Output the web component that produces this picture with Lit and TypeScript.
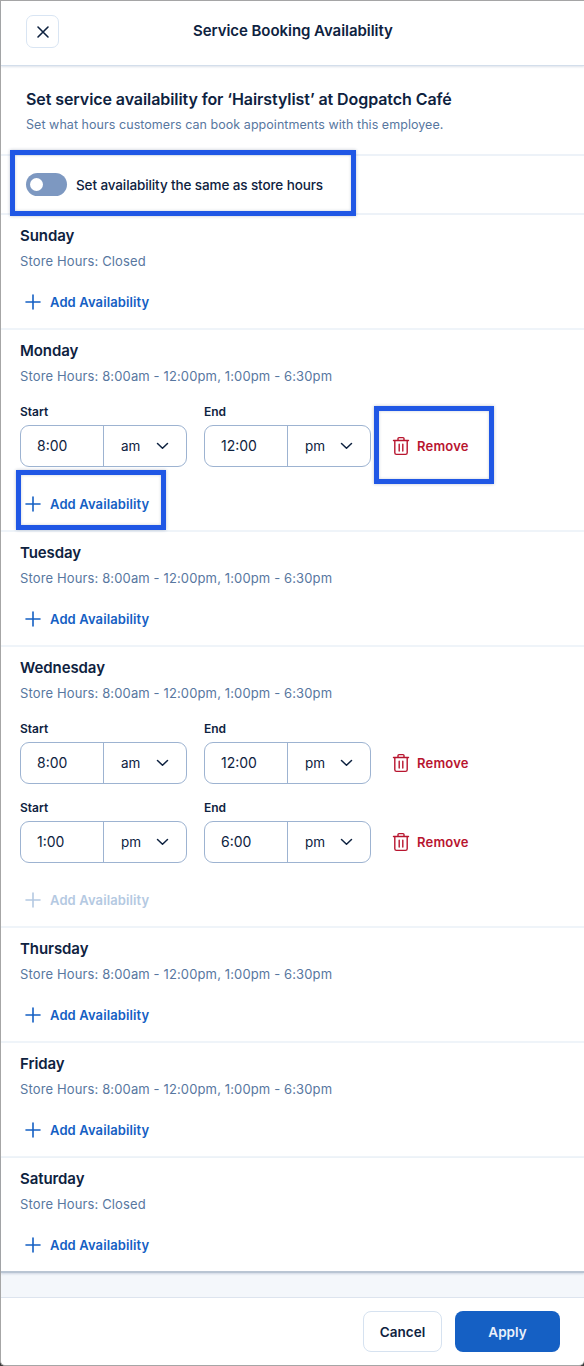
import { LitElement, html, css, svg } from "lit";
import { customElement } from "lit/decorators.js";

type Slot = { start: string; sm: string; end: string; em: string };
type Day = { name: string; hours: string; slots: Slot[]; disabled?: boolean };

const OPEN = "Store Hours: 8:00am - 12:00pm, 1:00pm - 6:30pm";
const CLOSED = "Store Hours: Closed";
const AM: Slot = { start: "8:00", sm: "am", end: "12:00", em: "pm" };
const PM: Slot = { start: "1:00", sm: "pm", end: "6:00", em: "pm" };

const DAYS: Day[] = [
  { name: "Sunday", hours: CLOSED, slots: [] },
  { name: "Monday", hours: OPEN, slots: [AM] },
  { name: "Tuesday", hours: OPEN, slots: [] },
  { name: "Wednesday", hours: OPEN, slots: [AM, PM], disabled: true },
  { name: "Thursday", hours: OPEN, slots: [] },
  { name: "Friday", hours: OPEN, slots: [] },
  { name: "Saturday", hours: CLOSED, slots: [] },
];

const chevron = svg`<svg class="chev" viewBox="0 0 14 14" width="14" height="14"><path d="M1.500 4.500 6.500 9.300 11.500 4.500" fill="none" stroke="#0e2240" stroke-width="1.5" stroke-linecap="round" stroke-linejoin="round"/></svg>`;
const plus = svg`<svg viewBox="0 0 16 16" width="16" height="16"><path d="M8 1v14M1 8h14" fill="none" stroke="currentColor" stroke-width="1.6" stroke-linecap="round"/></svg>`;
const trash = svg`<svg viewBox="0 0 18 20" width="18" height="20"><path d="M1.500 4.500h15M6 4.500V2.600c0-.6.4-1 1-1h4c.6 0 1 .4 1 1v1.900M2.800 4.500v12.200c0 .9.700 1.700 1.700 1.700h9c1 0 1.700-.8 1.700-1.700V4.500M7.200 8.200v6.800M10.800 8.200v6.800" fill="none" stroke="#b8152f" stroke-width="1.4" stroke-linecap="round" stroke-linejoin="round"/></svg>`;

@customElement("app-root")
export class AppRoot extends LitElement {
  static styles = css`
    :host {
      display: block;
      position: relative;
      width: 584px;
      height: 1366px;
      background: #3a3a3a;
      font-family: Inter, "Noto Sans", sans-serif;
      color: #0e2240;
      overflow: hidden;
    }
    .win {
      height: 100%;
      box-sizing: border-box;
      background: #fff;
      border-left: 1px solid #a6a6a6;
      border-top: 1px solid #a6a6a6;
      border-bottom: 1px solid #a6a6a6;
      border-radius: 0 0 5px 5px;
      display: flex;
      flex-direction: column;
    }
    header {
      height: 65px;
      flex: none;
      box-sizing: border-box;
      display: flex;
      align-items: center;
      padding-left: 25px;
      border-bottom: 1px solid #d3deeb;
      box-shadow: 0 1px 2px rgba(120, 140, 170, 0.25);
      position: relative;
    }
    .close {
      width: 33px;
      height: 33px;
      box-sizing: border-box;
      border: 1px solid #d9e5f3;
      border-radius: 7px;
      display: flex;
      align-items: center;
      justify-content: center;
      margin-top: -3px;
    }
    header h1 {
      margin: -5px 0 0 134px;
      font-size: 15px;
      font-weight: 600;
      letter-spacing: -0.05px;
      line-height: 20px;
    }
    .intro {
      flex: none;
      height: 90px;
      box-sizing: border-box;
      padding: 23px 0 0 25px;
      border-bottom: 2px solid #edf2f8;
    }
    .intro h2 {
      margin: 0;
      font-size: 16px;
      font-weight: 600;
      line-height: 20px;
      letter-spacing: -0.08px;
    }
    .intro p {
      margin: 7px 0 0;
      font-size: 12.5px;
      line-height: 18px;
      color: #58779f;
      letter-spacing: 0.05px;
    }
    .toggle-row {
      flex: none;
      height: 59px;
      box-sizing: border-box;
      display: flex;
      align-items: center;
      gap: 9px;
      padding-left: 25px;
      border-bottom: 2px solid #edf2f8;
      font-size: 13.5px;
      font-weight: 500;
      letter-spacing: -0.11px;
    }
    .switch {
      width: 41px;
      height: 23px;
      border-radius: 12px;
      background: #7d98c1;
      display: flex;
      align-items: center;
      padding-left: 4px;
      box-sizing: border-box;
    }
    .switch i {
      width: 13px;
      height: 13px;
      background: #fff;
      border-radius: 50%;
    }
    .day {
      flex: none;
      box-sizing: border-box;
      padding: 11px 0 6px 19px;
      border-bottom: 2px solid #eff4f9;
    }
    .day:last-of-type {
      border-bottom: 2px solid #b9c5d3;
      box-shadow: 0 1px 2px rgba(120, 140, 170, 0.3);
      position: relative;
    }
    .day h3 {
      margin: 0;
      font-size: 15px;
      font-weight: 600;
      line-height: 20px;
      letter-spacing: -0.08px;
    }
    .hours {
      margin-top: 5px;
      font-size: 13px;
      line-height: 20px;
      color: #58779f;
      letter-spacing: 0.13px;
    }
    .slots {
      margin-top: 18px;
      display: flex;
      flex-direction: column;
      gap: 16px;
    }
    .slot {
      display: flex;
      gap: 17px;
      align-items: flex-end;
    }
    .field label {
      display: block;
      font-size: 12px;
      font-weight: 600;
      line-height: 16px;
      margin-bottom: 5px;
    }
    .input {
      width: 167px;
      height: 42px;
      box-sizing: border-box;
      border: 1px solid #9db3d1;
      border-radius: 9px;
      display: flex;
      align-items: center;
      font-size: 14px;
    }
    .input .val {
      width: 83px;
      height: 100%;
      box-sizing: border-box;
      border-right: 1px solid #9db3d1;
      padding-left: 16px;
      line-height: 40px;
    }
    .input .mer {
      padding-left: 17px;
      width: 35px;
      font-size: 13.5px;
    }
    .remove {
      height: 42px;
      display: flex;
      align-items: center;
      gap: 7px;
      margin-left: 4px;
      font-size: 13px;
      font-weight: 600;
      color: #b8152f;
      letter-spacing: 0.2px;
    }
    .add {
      height: 40px;
      display: flex;
      align-items: center;
      gap: 9px;
      padding-left: 5px;
      font-size: 13px;
      font-weight: 600;
      color: #1560c4;
      letter-spacing: 0.12px;
    }
    .slots + .add {
      margin-top: 17px;
    }
    .hours + .add {
      margin-top: 11px;
    }
    .add.off {
      color: #b4c9e2;
    }
    .strip {
      flex: 1;
      background: #f4f7fb;
      border-bottom: 1px solid #dde4ee;
    }
    footer {
      flex: none;
      height: 67px;
      box-sizing: border-box;
      display: flex;
      justify-content: flex-end;
      gap: 13px;
      padding: 13px 24px 0 0;
    }
    .btn {
      height: 41px;
      box-sizing: border-box;
      border-radius: 8px;
      display: flex;
      align-items: center;
      justify-content: center;
      font-size: 13.5px;
      font-weight: 600;
    }
    .cancel {
      width: 79px;
      border: 1px solid #d6e2f0;
    }
    .apply {
      width: 105px;
      background: #1560c4;
      color: #eaf1fb;
    }
    .hl {
      position: absolute;
      box-sizing: border-box;
      border: 5px solid #2057e5;
      box-shadow: 0 0 3px rgba(40, 60, 100, 0.3), inset 0 0 3px rgba(40, 60, 100, 0.25);
    }
    .hl-toggle {
      left: 10px;
      top: 150px;
      width: 346px;
      height: 66px;
    }
    .hl-remove {
      left: 374px;
      top: 406px;
      width: 120px;
      height: 78px;
    }
    .hl-add {
      left: 16px;
      top: 470px;
      width: 150px;
      height: 60px;
    }
  `;

  private renderSlot(s: Slot) {
    const field = (label: string, val: string, mer: string) => html`
      <div class="field">
        <label>${label}</label>
        <div class="input">
          <span class="val">${val}</span><span class="mer">${mer}</span>${chevron}
        </div>
      </div>
    `;
    return html`
      <div class="slot">
        ${field("Start", s.start, s.sm)} ${field("End", s.end, s.em)}
        <div class="remove">${trash}<span>Remove</span></div>
      </div>
    `;
  }

  private renderDay(d: Day) {
    return html`
      <section class="day">
        <h3>${d.name}</h3>
        <div class="hours">${d.hours}</div>
        ${d.slots.length
          ? html`<div class="slots">${d.slots.map((s) => this.renderSlot(s))}</div>`
          : null}
        <div class="add ${d.disabled ? "off" : ""}">${plus}<span>Add Availability</span></div>
      </section>
    `;
  }

  render() {
    return html`
      <div class="win">
        <header>
          <div class="close">
            <svg viewBox="0 0 14 14" width="14" height="14"><path d="M2 2l10 10M12 2 2 12" fill="none" stroke="#0e2240" stroke-width="1.6" stroke-linecap="round"/></svg>
          </div>
          <h1>Service Booking Availability</h1>
        </header>
        <div class="intro">
          <h2>Set service availability for ‘Hairstylist’ at Dogpatch Café</h2>
          <p>Set what hours customers can book appointments with this employee.</p>
        </div>
        <div class="toggle-row">
          <div class="switch"><i></i></div>
          <span>Set availability the same as store hours</span>
        </div>
        ${DAYS.map((d) => this.renderDay(d))}
        <div class="strip"></div>
        <footer>
          <div class="btn cancel">Cancel</div>
          <div class="btn apply">Apply</div>
        </footer>
      </div>
      <div class="hl hl-toggle"></div>
      <div class="hl hl-remove"></div>
      <div class="hl hl-add"></div>
    `;
  }
}
